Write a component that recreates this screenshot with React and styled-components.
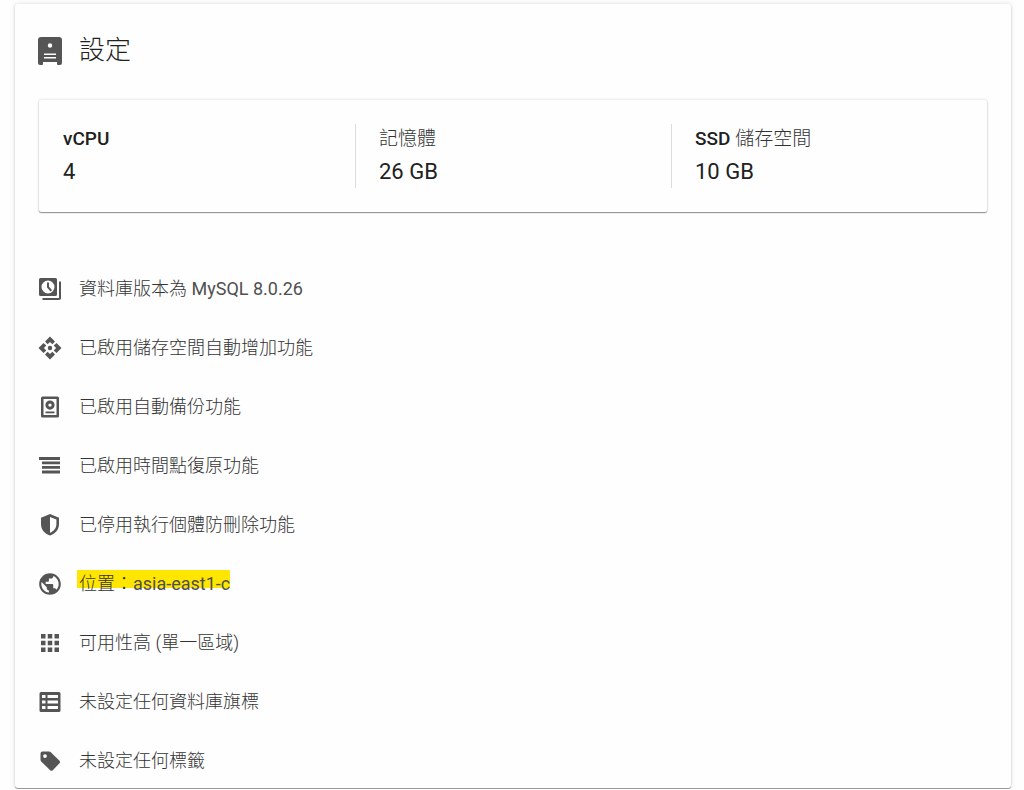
import React from "react";
import styled, { createGlobalStyle } from "styled-components";
import { MdPublic } from "react-icons/md";

const GlobalStyle = createGlobalStyle`
  * { box-sizing: border-box; }
  body {
    margin: 0;
    background: #fefefe;
    color: #212121;
    font-family: Roboto, "Noto Sans CJK TC", sans-serif;
  }
`;

const Page = styled.main`
  padding: 4px 13px 1px 15px;
`;

const Card = styled.section`
  padding: 24px 22px 14px;
  background: #fefefe;
  border-radius: 3px;
  box-shadow: 0 1px 1px rgba(0, 0, 0, 0.4), 0 0 5px rgba(0, 0, 0, 0.14);
`;

const Header = styled.header`
  display: flex;
  align-items: center;
  gap: 16px;
  height: 46px;
`;

const Title = styled.h1`
  margin: 0;
  font-size: 26px;
  line-height: 38px;
  padding-bottom: 2px;
  font-weight: 300;
`;

const Icon = styled.svg`
  flex: none;
  display: block;
  width: 26px;
  height: ${(p) => (p.$tall ? 30 : 26)}px;
  fill: #555;
`;

const Summary = styled.dl`
  display: grid;
  grid-template-columns: repeat(3, 1fr);
  margin: 26px 2px 63px;
  padding: 24px 0;
  border-radius: 2px;
  box-shadow: 0 1px 1px rgba(0, 0, 0, 0.4), 0 0 3px rgba(0, 0, 0, 0.18);
`;

const Stat = styled.div`
  display: grid;
  gap: 2px;
  padding-left: 24px;

  & + & {
    border-left: 1px solid #dcdcdc;
    padding-left: 23px;
  }
`;

const StatLabel = styled.dt`
  font-size: 19px;
  line-height: 30px;
  font-weight: 500;
`;

const StatValue = styled.dd`
  margin: 0;
  font-size: 22px;
  line-height: 32px;
`;

const Han = styled.span`
  font-weight: 300;
  color: #333;
`;

const Settings = styled.ul`
  display: grid;
  gap: 32px;
  margin: 0;
  padding: 0;
  list-style: none;
`;

const Setting = styled.li`
  display: flex;
  align-items: center;
  gap: 16px;
  font-size: 18px;
  line-height: 27px;
  color: #505050;
`;

const Highlight = styled.mark`
  color: inherit;
  display: inline-block;
  background: linear-gradient(#ffe600, #ffe600) no-repeat 0 0 / 100% 18px;
  margin-left: -2px;
  padding-left: 2px;
`;

const ServerIcon = () => (
  <Icon $tall viewBox="0 0 26 30" aria-hidden="true">
    <path
      fillRule="evenodd"
      d="M4 1h18a3 3 0 0 1 3 3v23a2 2 0 0 1-2 2h-2a1 1 0 0 1-1-1v-2H6v2a1 1 0 0 1-1 1H3a2 2 0 0 1-2-2V4a3 3 0 0 1 3-3zM13 7.300a2.200 2.200 0 1 0 0 4.400a2.200 2.200 0 0 0 0-4.400zM7 17.500v1.500h12v-1.500zM7 21v1.500h12V21z"
    />
  </Icon>
);

const VersionIcon = () => (
  <Icon viewBox="0 0 26 26" aria-hidden="true">
    <path
      fillRule="evenodd"
      d="M3.500 2h15a1.500 1.500 0 0 1 1.500 1.500v15a1.500 1.500 0 0 1-1.500 1.500h-15A1.500 1.500 0 0 1 2 18.500v-15A1.500 1.500 0 0 1 3.500 2zM11 4.500a6.500 6.500 0 1 0 0 13a6.500 6.500 0 0 0 0-13z"
    />
    <path d="M10 6.500h2v4.300l3 3.200-1.400 1.400-3.600-3.900z" />
    <path d="M22 5.500h2V22a2 2 0 0 1-2 2H5.500v-2H22z" />
  </Icon>
);

const ExpandIcon = () => (
  <Icon viewBox="0 0 26 26" aria-hidden="true">
    <path d="M13 1.500l5 5-2.600 2.800L13 6.900l-2.400 2.400L8 6.500z" />
    <path d="M13 24.500l5-5-2.600-2.800L13 19.100l-2.400-2.400L8 19.500z" />
    <path d="M1.500 13l5-5 2.800 2.600L6.900 13l2.400 2.400L6.500 18z" />
    <path d="M24.500 13l-5-5-2.800 2.600 2.400 2.400-2.400 2.400 2.800 2.600z" />
    <circle cx="13" cy="13" r="2.200" />
  </Icon>
);

const BackupIcon = () => (
  <Icon viewBox="0 0 26 26" aria-hidden="true">
    <path
      fillRule="evenodd"
      d="M5.500 2.500h15A1.500 1.500 0 0 1 22 4v18a1.500 1.500 0 0 1-1.500 1.500h-15A1.500 1.500 0 0 1 4 22V4a1.500 1.500 0 0 1 1.500-1.500zM6.500 5v16h13V5z"
    />
    <path
      fillRule="evenodd"
      d="M13 6.500a4.600 4.600 0 1 1 0 9.200a4.600 4.600 0 0 1 0-9.200zM13 9.400a1.700 1.700 0 1 0 0 3.400a1.700 1.700 0 0 0 0-3.400z"
    />
    <path d="M8.500 17.500h9v1.800h-9z" />
  </Icon>
);

const RestoreIcon = () => (
  <Icon viewBox="0 0 26 26" aria-hidden="true">
    <path d="M2 4h21v3H2zM5 8.500h18v2.700H5zM5 13h18v2.700H5zM5 17.500h18v3H5z" />
  </Icon>
);

const ShieldIcon = () => (
  <Icon viewBox="0 0 26 26" aria-hidden="true">
    <path
      fillRule="evenodd"
      d="M13 2l9 3.800V12c0 5.600-3.700 9.800-9 11.500C7.700 21.800 4 17.600 4 12V5.800zM13 5v15.800c3.800-1.600 6.400-4.700 6.400-8.800V7.600z"
    />
  </Icon>
);

const GridIcon = () => (
  <Icon viewBox="0 0 26 26" aria-hidden="true">
    <path d="M4 4h4.500v4.500H4zM10.750 4h4.500v4.500h-4.500zM17.500 4H22v4.500h-4.500zM4 10.750h4.500v4.500H4zM10.750 10.750h4.500v4.500h-4.500zM17.500 10.750H22v4.500h-4.500zM4 17.500h4.500V22H4zM10.750 17.500h4.500V22h-4.500zM17.500 17.500H22V22h-4.500z" />
  </Icon>
);

const FlagsIcon = () => (
  <Icon viewBox="0 0 26 26" aria-hidden="true">
    <path
      fillRule="evenodd"
      d="M4 3h18a1.500 1.500 0 0 1 1.500 1.500v17A1.500 1.500 0 0 1 22 23H4a1.500 1.500 0 0 1-1.500-1.500v-17A1.500 1.500 0 0 1 4 3zM5 6v3h3.500V6zM10.500 6v3H21V6zM5 11.500v3h3.500v-3zM10.500 11.500v3H21v-3zM5 17v3h3.500v-3zM10.500 17v3H21v-3z"
    />
  </Icon>
);

const TagIcon = () => (
  <Icon viewBox="0 0 26 26" aria-hidden="true">
    <path
      fillRule="evenodd"
      d="M5.500 3.500H12c.6 0 1.100.2 1.500.6l9 8.600c.8.800.8 1.800 0 2.600l-6.700 6.900c-.8.800-1.800.8-2.600 0L4.400 13.700c-.6-.6-.9-1.100-.9-1.900V5.500a2 2 0 0 1 2-2zM8 6.200a1.900 1.900 0 1 0 0 3.800a1.900 1.900 0 0 0 0-3.800z"
    />
  </Icon>
);

const GlobeIcon = () => <Icon as={MdPublic} aria-hidden="true" />;

const settings = [
  { icon: VersionIcon, text: "資料庫版本為", latin: " MySQL 8.0.26" },
  { icon: ExpandIcon, text: "已啟用儲存空間自動增加功能" },
  { icon: BackupIcon, text: "已啟用自動備份功能" },
  { icon: RestoreIcon, text: "已啟用時間點復原功能" },
  { icon: ShieldIcon, text: "已停用執行個體防刪除功能" },
  { icon: GlobeIcon, text: "位置：", latin: "asia-east1-c", marked: true },
  { icon: GridIcon, text: "可用性高 (單一區域)" },
  { icon: FlagsIcon, text: "未設定任何資料庫旗標" },
  { icon: TagIcon, text: "未設定任何標籤" },
];

export default function App() {
  return (
    <Page>
      <GlobalStyle />
      <Card>
        <Header>
          <ServerIcon />
          <Title>設定</Title>
        </Header>
        <Summary>
          <Stat>
            <StatLabel>vCPU</StatLabel>
            <StatValue>4</StatValue>
          </Stat>
          <Stat>
            <StatLabel><Han>記憶體</Han></StatLabel>
            <StatValue>26 GB</StatValue>
          </Stat>
          <Stat>
            <StatLabel>SSD <Han>儲存空間</Han></StatLabel>
            <StatValue>10 GB</StatValue>
          </Stat>
        </Summary>
        <Settings>
          {settings.map(({ icon: RowIcon, text, latin, marked }) => {
            const Text = marked ? Highlight : "span";
            return (
              <Setting key={text}>
                <RowIcon />
                <Text><Han>{text}</Han>{latin}</Text>
              </Setting>
            );
          })}
        </Settings>
      </Card>
    </Page>
  );
}
